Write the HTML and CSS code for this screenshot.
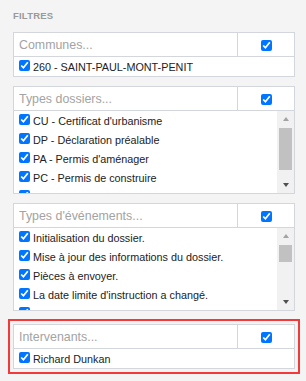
FILE: index.html
```html
<!DOCTYPE html>
<html lang="fr">
<head>
<meta charset="utf-8">
<title>Filtres</title>
<link rel="stylesheet" href="styles.css">
</head>
<body>
<div class="panel">
  <div class="title">FILTRES</div>

  <div class="filter">
    <div class="head">
      <input class="search" type="text" placeholder="Communes...">
      <div class="all"><input type="checkbox" checked></div>
    </div>
    <div class="list">
      <label class="item"><input type="checkbox" checked><span>260 - SAINT-PAUL-MONT-PENIT</span></label>
    </div>
  </div>

  <div class="filter">
    <div class="head">
      <input class="search" type="text" placeholder="Types dossiers...">
      <div class="all"><input type="checkbox" checked></div>
    </div>
    <div class="list scroll">
      <div class="items">
        <label class="item"><input type="checkbox" checked><span>CU - Certificat d'urbanisme</span></label>
        <label class="item"><input type="checkbox" checked><span>DP - Déclaration préalable</span></label>
        <label class="item"><input type="checkbox" checked><span>PA - Permis d'aménager</span></label>
        <label class="item"><input type="checkbox" checked><span>PC - Permis de construire</span></label>
        <label class="item"><input type="checkbox" checked><span>PD - Permis de démolir</span></label>
      </div>
      <div class="sbar" aria-hidden="true">
        <div class="sb-btn"><span class="tri up off"></span></div>
        <div class="sb-track"><div class="sb-thumb" style="height:42px"></div></div>
        <div class="sb-btn"><span class="tri down"></span></div>
      </div>
    </div>
  </div>

  <div class="filter">
    <div class="head">
      <input class="search" type="text" placeholder="Types d'événements...">
      <div class="all"><input type="checkbox" checked></div>
    </div>
    <div class="list scroll">
      <div class="items">
        <label class="item"><input type="checkbox" checked><span>Initialisation du dossier.</span></label>
        <label class="item"><input type="checkbox" checked><span>Mise à jour des informations du dossier.</span></label>
        <label class="item"><input type="checkbox" checked><span>Pièces à envoyer.</span></label>
        <label class="item"><input type="checkbox" checked><span>La date limite d'instruction a changé.</span></label>
        <label class="item"><input type="checkbox" checked><span>La composition de l'instruction a été modifiée.</span></label>
        <label class="item"><input type="checkbox" checked><span>Nouvelle pièce déposée.</span></label>
      </div>
      <div class="sbar" aria-hidden="true">
        <div class="sb-btn"><span class="tri up off"></span></div>
        <div class="sb-track"><div class="sb-thumb" style="height:17px"></div></div>
        <div class="sb-btn"><span class="tri down"></span></div>
      </div>
    </div>
  </div>

  <div class="filter highlight">
    <div class="head">
      <input class="search" type="text" placeholder="Intervenants...">
      <div class="all"><input type="checkbox" checked></div>
    </div>
    <div class="list">
      <label class="item"><input type="checkbox" checked><span>Richard Dunkan</span></label>
    </div>
  </div>

  <div class="filter">
    <div class="head">
      <input class="search" type="text" placeholder="Statuts...">
      <div class="all"><input type="checkbox" checked></div>
    </div>
  </div>
</div>
</body>
</html>
```

FILE: styles.css
```css
html, body {
  margin: 0;
  padding: 0;
  background: #f4f4f4;
  font-family: "Liberation Sans", Arial, sans-serif;
}

.panel {
  padding: 10px 12px 0 13px;
  display: flex;
  flex-direction: column;
  gap: 9px;
}

.title {
  font-size: 9.5px;
  font-weight: bold;
  color: #9a9a9a;
  letter-spacing: 0.2px;
  line-height: 12px;
  margin-bottom: 1px;
}

.filter {
  background: #fff;
  border: 1px solid #d3d6dd;
  width: 280px;
  flex: none;
}

.filter.highlight {
  outline: 2px solid #f23a3a;
  outline-offset: 3px;
  margin: 4px 0;
}

.head {
  display: flex;
  height: 23px;
  border-bottom: 1px solid #d3d6dd;
}

.search {
  flex: 1;
  min-width: 0;
  border: none;
  outline: none;
  padding: 0 0 0 5px;
  margin: 0;
  font-family: "Liberation Sans", Arial, sans-serif;
  font-size: 12.4px;
  color: #333;
  background: transparent;
}

.search::placeholder {
  color: #a3a3a3;
}

.all {
  width: 56px;
  border-left: 1px solid #d3d6dd;
  display: flex;
  align-items: center;
  justify-content: center;
}

input[type="checkbox"] {
  width: 11px;
  height: 11px;
  margin: 0;
  accent-color: #0075ff;
}

.all input[type="checkbox"] {
  margin: 2px 0 0 1px;
}

.list {
  display: flex;
  flex-direction: column;
}

.list.scroll {
  flex-direction: row;
  height: 82px;
}

.items {
  flex: 1;
  min-width: 0;
  overflow: hidden;
  display: flex;
  flex-direction: column;
}

.sbar {
  width: 17px;
  flex: none;
  background: #f1f1f1;
  display: flex;
  flex-direction: column;
}

.sb-btn {
  height: 17px;
  flex: none;
  display: flex;
  align-items: center;
  justify-content: center;
}

.sb-track {
  flex: 1;
  padding: 0 2px;
}

.sb-thumb {
  background: #c1c1c1;
}

.tri {
  width: 0;
  height: 0;
  border-left: 3.5px solid transparent;
  border-right: 3.5px solid transparent;
}

.tri.up {
  border-bottom: 4px solid #505050;
  margin-top: -1px;
}

.tri.up.off {
  border-bottom-color: #a3a3a3;
}

.tri.down {
  border-top: 4px solid #505050;
  margin-top: 1px;
}

.item {
  display: flex;
  align-items: center;
  gap: 3px;
  height: 19px;
  flex: none;
  padding-left: 5px;
  font-size: 10.8px;
  color: #222;
  white-space: nowrap;
}

.item input[type="checkbox"] {
  margin-top: -3px;
}
```
